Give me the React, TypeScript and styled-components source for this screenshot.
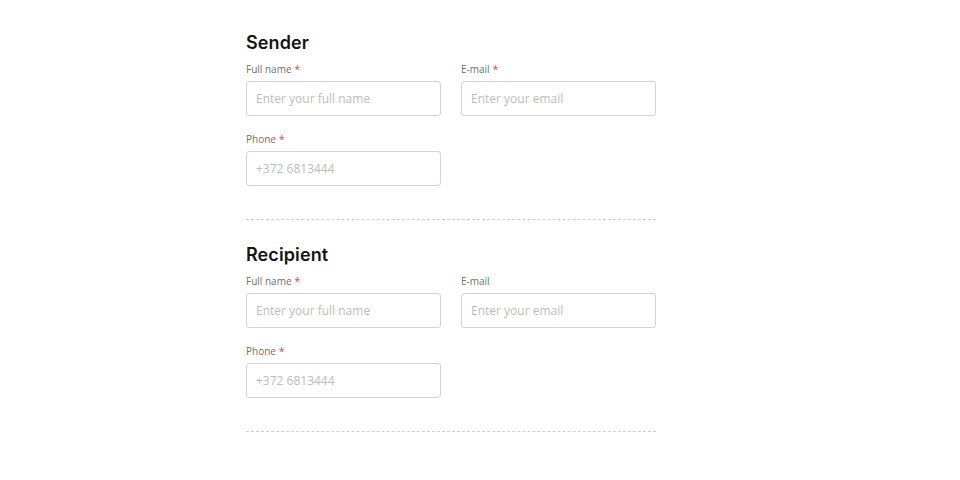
import React from 'react';
import styled, { createGlobalStyle } from 'styled-components';

type Field = {
  label: string;
  placeholder: string;
  required?: boolean;
};

type Section = {
  title: string;
  fields: Field[];
};

const sections: Section[] = [
  {
    title: 'Sender',
    fields: [
      { label: 'Full name', placeholder: 'Enter your full name', required: true },
      { label: 'E-mail', placeholder: 'Enter your email', required: true },
      { label: 'Phone', placeholder: '+372 6813444', required: true },
    ],
  },
  {
    title: 'Recipient',
    fields: [
      { label: 'Full name', placeholder: 'Enter your full name', required: true },
      { label: 'E-mail', placeholder: 'Enter your email' },
      { label: 'Phone', placeholder: '+372 6813444', required: true },
    ],
  },
];

const GlobalStyle = createGlobalStyle`
  body {
    margin: 0;
    background: #fff;
    font-family: 'Open Sans', 'Noto Sans', sans-serif;
  }
`;

const Container = styled.div`
  width: 410px;
  margin: 0 auto;
  padding-top: 32px;
  position: relative;
  left: -29px;
`;

const StyledSection = styled.section`
  border-bottom: 1px dashed #cfcfcf;
  padding-bottom: 33px;
  margin-bottom: 24px;
`;

const StyledH2 = styled.h2`
  margin: 0 0 8px;
  font-family: 'Inter', sans-serif;
  font-weight: 600;
  font-size: 18px;
  line-height: 22px;
  color: #141414;
  letter-spacing: 0.1px;
`;

const Grid = styled.div`
  display: grid;
  grid-template-columns: 195px 195px;
  column-gap: 20px;
  row-gap: 16px;
`;

const FieldBox = styled.label`
  display: flex;
  flex-direction: column;
  gap: 5px;
`;

const Label = styled.span`
  font-size: 10px;
  line-height: 14px;
  color: #707070;
`;

const Star = styled.span`
  color: #e8403a;
  margin-left: 3px;
`;

const StyledInput = styled.input`
  box-sizing: border-box;
  height: 35px;
  width: 100%;
  border: 1px solid #d4d4d4;
  border-radius: 3px;
  padding: 0 9px;
  font-family: 'Open Sans', sans-serif;
  font-size: 12px;
  color: #333;
  background: #fff;
  outline: none;

  &::placeholder {
    color: #bdbdbd;
    opacity: 1;
  }
`;

const App = () => {
  return (
    <>
      <GlobalStyle />
      <Container>
        {sections.map((section) => (
          <StyledSection key={section.title}>
            <StyledH2>{section.title}</StyledH2>
            <Grid>
              {section.fields.map((field) => (
                <FieldBox key={field.label}>
                  <Label>
                    {field.label}
                    {field.required && <Star>*</Star>}
                  </Label>
                  <StyledInput placeholder={field.placeholder} />
                </FieldBox>
              ))}
            </Grid>
          </StyledSection>
        ))}
      </Container>
    </>
  );
};

export default App;
